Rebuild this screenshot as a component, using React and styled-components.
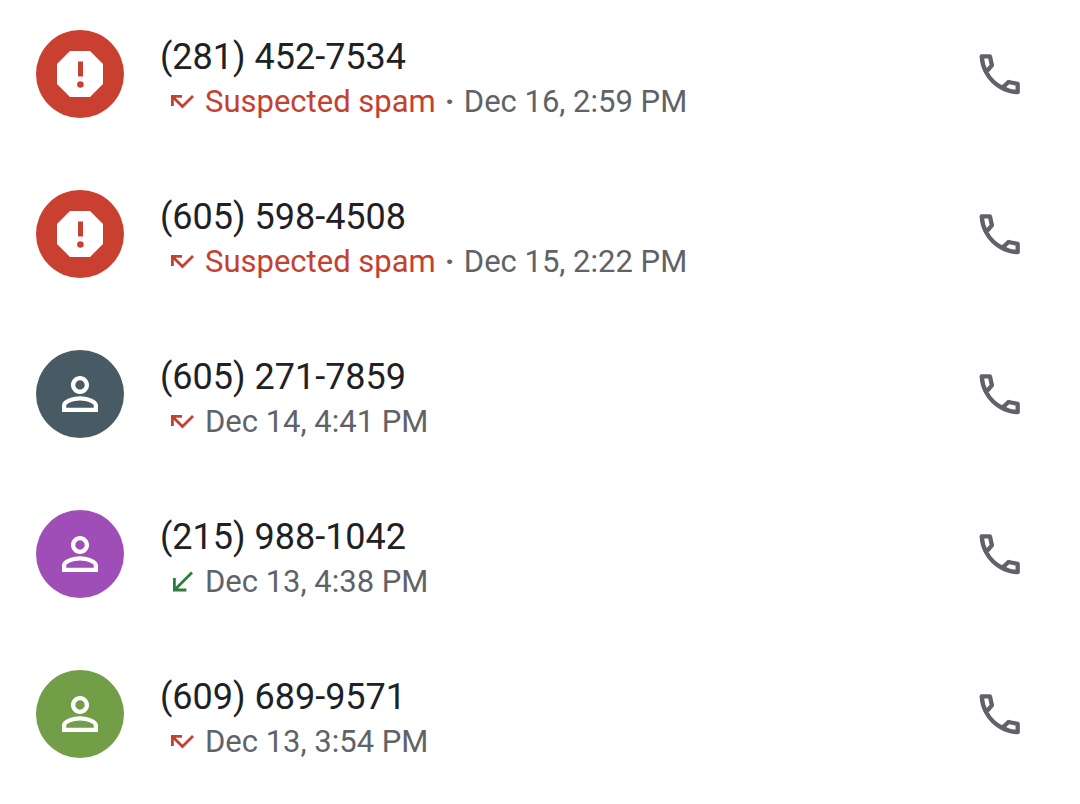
import React from 'react';
import styled, { createGlobalStyle } from 'styled-components';

const GlobalStyle = createGlobalStyle`
  * { box-sizing: border-box; }
  body { margin: 0; background: #fff; font-family: Roboto, "Liberation Sans", sans-serif; }
`;

const CallList = styled.ul`
  list-style: none;
  margin: 0;
  padding: 0;
`;

const CallRow = styled.li`
  display: flex;
  align-items: center;
  height: 160px;
  padding: 0 52px 12px 36px;
`;

const Avatar = styled.span`
  display: flex;
  align-items: center;
  justify-content: center;
  flex: none;
  width: 88px;
  height: 88px;
  border-radius: 50%;
  background: ${({ $color }) => $color};
  color: #fff;
`;

const Details = styled.div`
  flex: 1;
  min-width: 0;
  margin-left: 36px;
  padding-top: 8px;
`;

const PhoneNumber = styled.div`
  font-size: 36px;
  line-height: 48px;
  color: #202124;
`;

const Meta = styled.div`
  display: flex;
  align-items: center;
  padding-left: 8px;
  font-size: 31px;
  line-height: 42px;
  color: #5f6368;
  white-space: nowrap;
`;

const Direction = styled.svg`
  flex: none;
  margin-right: 8px;
`;

const SpamLabel = styled.span`
  color: #c5402f;
`;

const Separator = styled.span`
  width: 28px;
  text-align: center;
  font-weight: 700;
`;

const CallButton = styled.button`
  display: flex;
  flex: none;
  padding: 0;
  border: 0;
  background: none;
  color: #5f6368;
  cursor: pointer;
`;

function SpamIcon() {
  return (
    <svg width="56" height="56" viewBox="0 0 56 56" aria-hidden="true">
      <path fill="currentColor" d="M18 5h20l13 13v20L38 51H18L5 38V18z" />
      <path fill="#c94030" d="M26 15.500h5v15h-5z" />
      <circle fill="#c94030" cx="28.400" cy="38.500" r="3.300" />
    </svg>
  );
}

function PersonIcon() {
  return (
    <svg width="54" height="54" viewBox="0 0 24 24" fill="currentColor" aria-hidden="true">
      <path d="M12 5.9a2.1 2.1 0 1 1 0 4.2 2.1 2.1 0 0 1 0-4.2m0 9c2.970 0 6.100 1.460 6.100 2.100v1.100H5.900V17c0-.640 3.130-2.100 6.100-2.100M12 4C9.790 4 8 5.790 8 8s1.790 4 4 4 4-1.790 4-4-1.790-4-4-4zm0 9c-2.670 0-8 1.340-8 4v3h16v-3c0-2.660-5.330-4-8-4z" />
    </svg>
  );
}

function DirectionIcon({ missed }) {
  return (
    <Direction width="29" height="28" viewBox="0 0 29 28" fill="none" stroke={missed ? '#c5402f' : '#2e7d3a'} strokeWidth="2.8" role="img" aria-label={missed ? 'Missed call' : 'Incoming call'}>
      {missed ? <path d="M4.400 18V8.400H14M4.400 8.400l10.100 10.100L25 8" /> : <path d="M24 4.500L7 21.500M6.400 10v12h12" />}
    </Direction>
  );
}

function PhoneIcon() {
  return (
    <svg width="56" height="56" viewBox="0 0 56 56" fill="none" stroke="currentColor" strokeWidth="4.300" strokeLinejoin="round" aria-hidden="true">
      <path d="M9.700 10.300H17.900L19.900 19.300L14 26C11.300 20.800 10 15.600 9.700 10.300ZM14 26C17.700 33 23 38.200 30.200 42M30.200 42L36.500 36L45.700 37.900V46.200C40 45.900 35 44.500 30.200 42Z" />
    </svg>
  );
}

const calls = [
  { number: '(281) 452-7534', time: 'Dec 16, 2:59 PM', color: '#c94030', spam: true, missed: true },
  { number: '(605) 598-4508', time: 'Dec 15, 2:22 PM', color: '#c94030', spam: true, missed: true },
  { number: '(605) 271-7859', time: 'Dec 14, 4:41 PM', color: '#485a64', missed: true },
  { number: '(215) 988-1042', time: 'Dec 13, 4:38 PM', color: '#9f4db7' },
  { number: '(609) 689-9571', time: 'Dec 13, 3:54 PM', color: '#719e46', missed: true },
];

export default function App() {
  return (
    <>
      <GlobalStyle />
      <CallList>
        {calls.map((call) => (
          <CallRow key={call.number}>
            <Avatar $color={call.color}>{call.spam ? <SpamIcon /> : <PersonIcon />}</Avatar>
            <Details>
              <PhoneNumber>{call.number}</PhoneNumber>
              <Meta>
                <DirectionIcon missed={call.missed} />
                {call.spam && <><SpamLabel>Suspected spam</SpamLabel><Separator>·</Separator></>}
                <span>{call.time}</span>
              </Meta>
            </Details>
            <CallButton type="button" aria-label={`Call ${call.number}`}>
              <PhoneIcon />
            </CallButton>
          </CallRow>
        ))}
      </CallList>
    </>
  );
}
